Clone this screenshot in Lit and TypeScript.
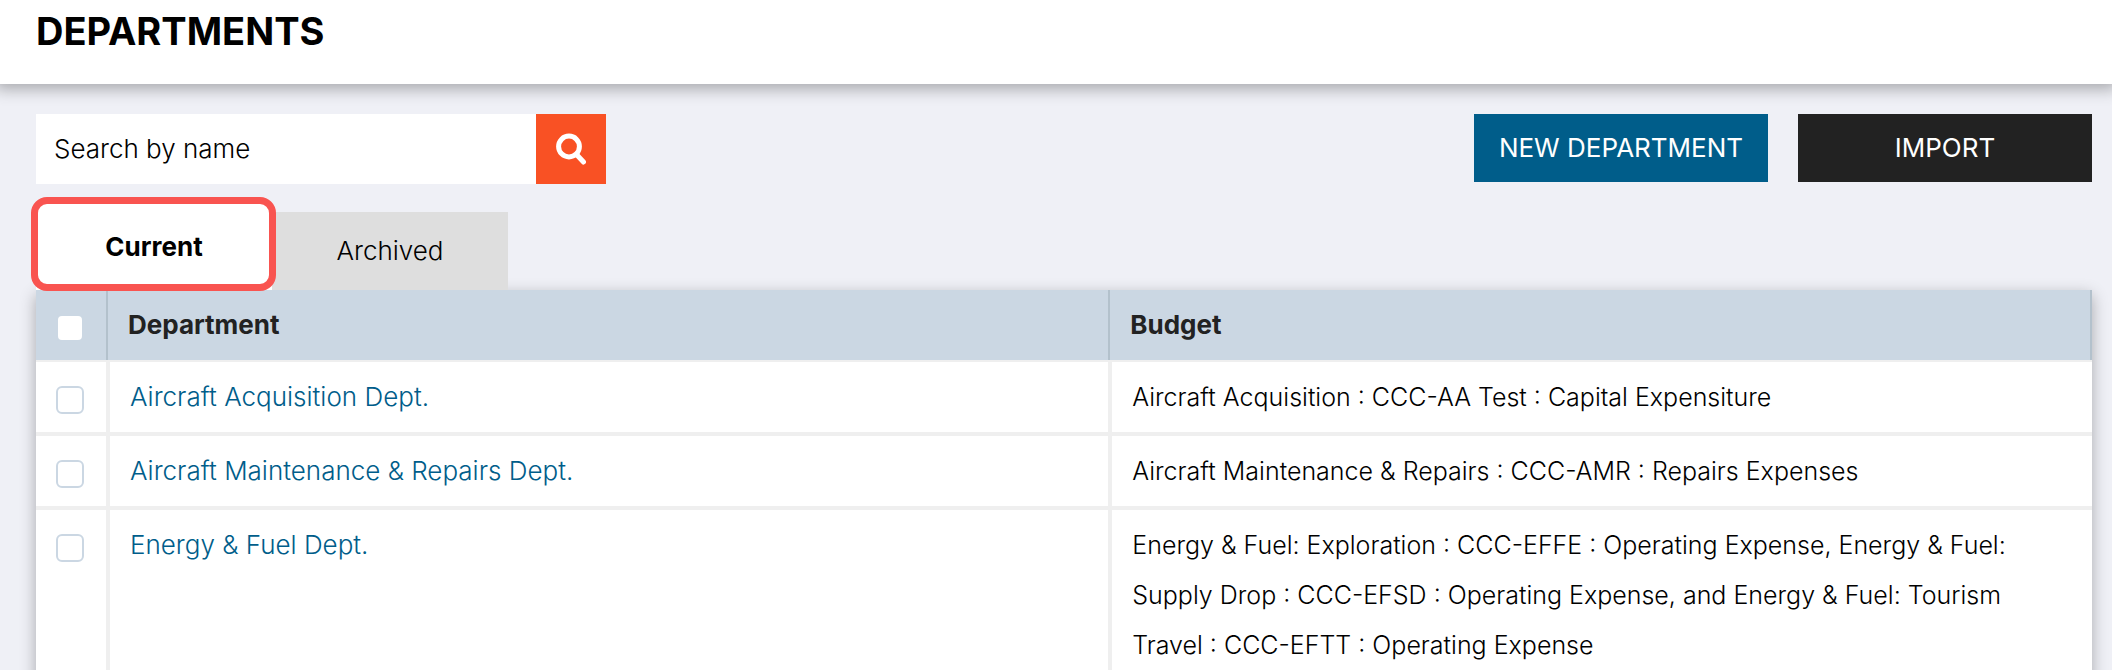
import { LitElement, html, css } from "lit";
import { customElement, property, state } from "lit/decorators.js";
import { classMap } from "lit/directives/class-map.js";

interface Department {
  name: string;
  budget: string;
}

const departments: Department[] = [
  {
    name: "Aircraft Acquisition Dept.",
    budget: "Aircraft Acquisition : CCC-AA Test : Capital Expensiture",
  },
  {
    name: "Aircraft Maintenance & Repairs Dept.",
    budget: "Aircraft Maintenance & Repairs : CCC-AMR : Repairs Expenses",
  },
  {
    name: "Energy & Fuel Dept.",
    budget:
      "Energy & Fuel: Exploration : CCC-EFFE : Operating Expense, Energy & Fuel: Supply Drop : CCC-EFSD : Operating Expense, and Energy & Fuel: Tourism Travel : CCC-EFTT : Operating Expense",
  },
];

@customElement("department-table")
class DepartmentTable extends LitElement {
  @property({ attribute: false }) rows: Department[] = [];

  static styles = css`
    :host {
      display: block;
    }
    .table {
      width: 100%;
      table-layout: fixed;
      border-spacing: 0;
      background: #fff;
      box-shadow: 0 5px 15px rgba(0, 0, 0, 0.3);
      line-height: 50px;
      text-align: left;
    }
    .col-check {
      width: 72px;
    }
    .col-name {
      width: 48.75%;
    }
    .head {
      padding: 10px 20px;
      background: #cbd7e3;
      border-right: 2px solid #b3c1cc;
      color: #222;
      font-size: 26px;
      font-weight: 700;
    }
    .cell {
      padding: 10px 40px 10px 20px;
      border: 2px solid #efefef;
      vertical-align: top;
    }
    .cell:first-child {
      border-left: 0;
    }
    .cell:last-child {
      border-right: 0;
    }
    .check-cell {
      padding: 24px 20px 0;
      vertical-align: top;
    }
    .check {
      display: block;
      appearance: none;
      box-sizing: border-box;
      width: 28px;
      height: 28px;
      margin: 0;
      border: 2px solid #cbd7e3;
      border-radius: 6px;
      background: #fff;
    }
    .check:checked {
      background: #005d8a;
    }
    .name-cell {
      font-size: 26px;
    }
    .link {
      color: #005d8a;
      text-decoration: none;
    }
  `;

  render() {
    return html`
      <table class="table">
        <colgroup>
          <col class="col-check" />
          <col class="col-name" />
          <col />
        </colgroup>
        <thead>
          <tr>
            <th class="head check-cell">
              <input class="check" type="checkbox" aria-label="Select all departments" />
            </th>
            <th class="head" scope="col">Department</th>
            <th class="head" scope="col">Budget</th>
          </tr>
        </thead>
        <tbody>
          ${this.rows.map(
            (row) => html`
              <tr>
                <td class="cell check-cell">
                  <input class="check" type="checkbox" aria-label=${`Select ${row.name}`} />
                </td>
                <td class="cell name-cell"><a class="link" href="#">${row.name}</a></td>
                <td class="cell">${row.budget}</td>
              </tr>
            `
          )}
        </tbody>
      </table>
    `;
  }
}

@customElement("app-root")
class AppRoot extends LitElement {
  @state() private tab = "Current";

  static styles = css`
    :host {
      display: block;
      min-height: 100vh;
      background: #eff0f6;
      color: #000;
      font: 300 25px/30px Inter, "Open Sans", sans-serif;
    }
    .header {
      padding: 7px 36px 29px;
      background: #fff;
      box-shadow: 0 0 15px 5px rgba(0, 0, 0, 0.3);
    }
    .title {
      margin: 0;
      font-size: 38px;
      line-height: 48px;
      font-weight: 700;
    }
    .main {
      padding: 30px 20px 0 36px;
    }
    .toolbar {
      display: flex;
      justify-content: space-between;
      align-items: flex-start;
      gap: 30px;
    }
    .search {
      display: flex;
      height: 70px;
    }
    .search-input {
      box-sizing: border-box;
      width: 500px;
      padding: 0 18px;
      border: 0;
      border-radius: 0;
      background: #fff;
      font: inherit;
      font-size: 26px;
    }
    .search-input::placeholder {
      color: #000;
      opacity: 1;
    }
    .search-button {
      display: grid;
      place-items: center;
      width: 70px;
      padding: 0;
      border: 0;
      background: #f95124;
    }
    .actions {
      display: flex;
      gap: 30px;
    }
    .action {
      width: 294px;
      height: 68px;
      padding: 0;
      border: 0;
      background: #222;
      color: #fff;
      font: inherit;
      font-size: 26px;
      font-weight: 400;
      white-space: nowrap;
    }
    .primary {
      background: #005d8a;
    }
    .tabs {
      position: relative;
      z-index: 1;
      display: flex;
      align-items: flex-end;
      padding-top: 20px;
    }
    .tab {
      width: 236px;
      height: 78px;
      padding: 0;
      border: 0;
      background: #dedede;
      color: #000;
      font: inherit;
      font-size: 26px;
    }
    .tab.active {
      position: relative;
      z-index: 1;
      height: 86px;
      background: #fff;
      font-weight: 700;
    }
    .tab.active::after {
      content: "";
      position: absolute;
      inset: -7px -4px -1px -5px;
      border: 7px solid #f95450;
      border-radius: 16px;
    }
  `;

  render() {
    return html`
      <header class="header"><h1 class="title">DEPARTMENTS</h1></header>
      <main class="main">
        <div class="toolbar">
          <form class="search" @submit=${(e: Event) => e.preventDefault()}>
            <input class="search-input" type="text" placeholder="Search by name" aria-label="Search by name" />
            <button class="search-button" aria-label="Search">
              <svg width="30" height="32" viewBox="0 0 30 32" fill="none" stroke="#fff" aria-hidden="true">
                <circle cx="13" cy="13.5" r="10.4" stroke-width="5" />
                <path d="M20.5 21.5 27.5 29" stroke-width="5" stroke-linecap="round" />
              </svg>
            </button>
          </form>
          <div class="actions">
            <button class="action primary">NEW DEPARTMENT</button>
            <button class="action">IMPORT</button>
          </div>
        </div>
        <div class="tabs" role="tablist">
          ${["Current", "Archived"].map(
            (name) => html`<button
              class=${classMap({ tab: true, active: this.tab === name })}
              role="tab"
              aria-selected=${this.tab === name ? "true" : "false"}
              @click=${() => (this.tab = name)}
            >${name}</button>`
          )}
        </div>
        <department-table .rows=${departments}></department-table>
      </main>
    `;
  }
}
